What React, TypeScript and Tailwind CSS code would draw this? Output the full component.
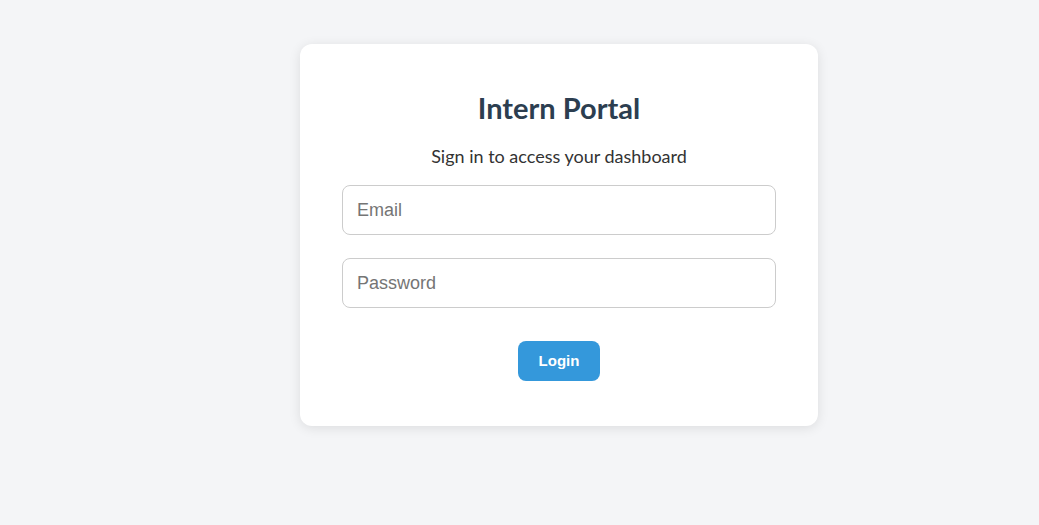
import React from "react";

export default function App() {
  return (
    <div className="min-h-[525px] w-full bg-[#f4f5f7] pt-[44px] pl-[300px] font-['Lato','Open_Sans',sans-serif]">
      <div className="w-[518px] h-[382px] bg-white rounded-[12px] shadow-[0_2px_12px_rgba(0,0,0,0.1)] px-[42px] pt-[48px] flex flex-col items-center">
        <h1 className="text-[29px] leading-[32px] font-bold text-[#2c3e50]">Intern Portal</h1>
        <p className="mt-[20px] text-[18px] leading-[24px] text-[#333]">Sign in to access your dashboard</p>
        <input
          type="email"
          placeholder="Email"
          className="mt-[17px] w-full h-[50px] rounded-[8px] border border-[#ccc] px-[14px] text-[18px] outline-none placeholder:text-[#757575] font-['Liberation_Sans',Arial,sans-serif]"
        />
        <input
          type="password"
          placeholder="Password"
          className="mt-[23px] w-full h-[50px] rounded-[8px] border border-[#ccc] px-[14px] text-[18px] outline-none placeholder:text-[#757575] font-['Liberation_Sans',Arial,sans-serif]"
        />
        <button className="mt-[33px] w-[82px] h-[40px] rounded-[8px] bg-[#3498db] text-white font-bold text-[15px] font-['Liberation_Sans',Arial,sans-serif]">
          Login
        </button>
      </div>
    </div>
  );
}
